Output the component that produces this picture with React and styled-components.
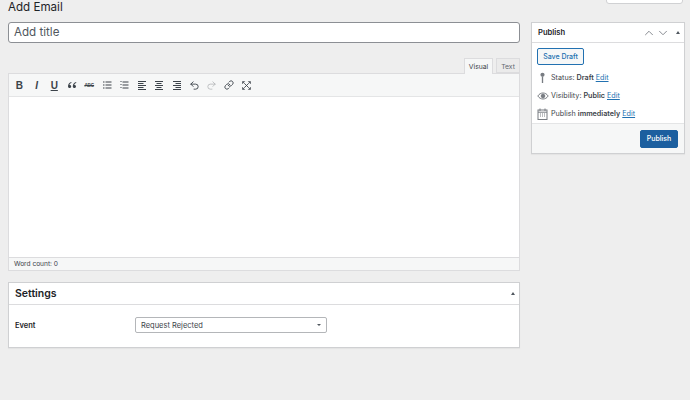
import React from 'react';
import styled, { createGlobalStyle } from 'styled-components';
import {
  Undo2, Redo2, Link, ChevronUp, ChevronDown,
} from 'lucide-react';

const GlobalStyle = createGlobalStyle`
  html, body {
    margin: 0;
    padding: 0;
    background: #eeeeee;
    font-family: Inter, "Liberation Sans", sans-serif;
    color: #1d2327;
    overflow: hidden;
  }
`;

const Page = styled.div`
  position: relative;
  width: 690px;
  height: 400px;
  display: flex;
  gap: 11px;
  padding: 0 5px 0 8px;
  box-sizing: border-box;
`;

const ScreenTab = styled.div`
  position: absolute;
  top: -1px;
  left: 606px;
  width: 77px;
  height: 5px;
  background: #fff;
  border: 1px solid #d0d1d3;
  border-radius: 0 0 3px 3px;
  box-sizing: border-box;
`;

const MainColumn = styled.div`
  width: 512px;
  display: flex;
  flex-direction: column;
`;

const SideColumn = styled.div`
  width: 154px;
  padding-top: 22px;
`;

const Heading = styled.h1`
  margin: 0;
  height: 22px;
  font-size: 11.6px;
  line-height: 14px;
  font-weight: 400;
  color: #1d2327;
`;

const TitleInput = styled.div`
  height: 21px;
  box-sizing: border-box;
  background: #fff;
  border: 1px solid #8c8f94;
  border-radius: 3px;
  padding: 0 5px;
  font-size: 11.6px;
  line-height: 19px;
  color: #50575e;
`;

const Tabs = styled.div`
  display: flex;
  justify-content: flex-end;
  gap: 3px;
  margin-top: 15px;
  height: 16px;
`;

const Tab = styled.div`
  width: ${(p) => (p.$active ? 29 : 24)}px;
  height: ${(p) => (p.$active ? 16 : 15)}px;
  box-sizing: border-box;
  text-align: center;
  font-size: 6.8px;
  line-height: 15px;
  color: ${(p) => (p.$active ? '#3c434a' : '#646970')};
  background: ${(p) => (p.$active ? '#f6f7f7' : '#ebebeb')};
  border: 1px solid #dcdcde;
  border-bottom: ${(p) => (p.$active ? 'none' : '1px solid #dcdcde')};
  z-index: 1;
`;

const Editor = styled.div`
  border: 1px solid #dcdcde;
  margin-top: -1px;
  display: flex;
  flex-direction: column;
`;

const Toolbar = styled.div`
  height: 23px;
  box-sizing: border-box;
  background: #f6f7f7;
  border-bottom: 1px solid #e4e5e6;
  display: flex;
  align-items: center;
  padding-left: 1.5px;
`;

const ToolButton = styled.span`
  width: 17.5px;
  height: 17px;
  display: flex;
  align-items: center;
  justify-content: center;
  color: ${(p) => (p.$off ? '#a7aaad' : '#3c434a')};
  font-family: "Liberation Sans", sans-serif;
  font-size: 10px;
  font-weight: 700;
  font-style: ${(p) => (p.$italic ? 'italic' : 'normal')};
  text-decoration: ${(p) => (p.$under ? 'underline' : 'none')};
`;

const TinyLabel = styled.span`
  font-size: 4.5px;
  text-decoration: line-through;
`;

const EditArea = styled.div`
  height: 160px;
  background: #fff;
`;

const StatusBar = styled.div`
  height: 13px;
  box-sizing: border-box;
  background: #f6f7f7;
  border-top: 1px solid #dcdcde;
  padding-left: 5px;
  font-size: 6.6px;
  line-height: 12px;
  color: #3c434a;
`;

const Box = styled.section`
  background: #fff;
  border: 1px solid #cfd0d2;
  box-shadow: 0 1px 1px rgba(0, 0, 0, 0.04);
  box-sizing: border-box;
`;

const SettingsBox = styled(Box)`
  margin-top: 11px;
  height: 66px;
`;

const BoxHeader = styled.div`
  height: ${(p) => p.$height}px;
  box-sizing: border-box;
  border-bottom: 1px solid #dcdcde;
  display: flex;
  align-items: center;
  justify-content: space-between;
  padding: 0 4px 0 ${(p) => p.$left}px;
`;

const SettingsTitle = styled.h2`
  margin: 0;
  font-size: 10.5px;
  font-weight: 600;
`;

const PublishTitle = styled.h2`
  margin: 0;
  font-size: 7.6px;
  font-weight: 600;
`;

const Caret = styled.span`
  width: 0;
  height: 0;
  border-left: 2.5px solid transparent;
  border-right: 2.5px solid transparent;
  border-bottom: 3px solid #50575e;
`;

const HeaderIcons = styled.div`
  display: flex;
  align-items: center;
  color: #787c82;

  ${Caret} {
    margin-left: 6px;
  }
`;

const FieldRow = styled.div`
  display: flex;
  align-items: center;
  padding: 12px 0 0 6px;
`;

const FieldLabel = styled.label`
  width: 120px;
  font-size: 7.5px;
  font-weight: 600;
`;

const Select = styled.div`
  width: 192px;
  height: 16px;
  box-sizing: border-box;
  background: #fff;
  border: 1px solid #b4b6b9;
  border-radius: 2px;
  display: flex;
  align-items: center;
  justify-content: space-between;
  padding: 0 5px;
  font-size: 7.5px;
  color: #3c434a;
`;

const SelectCaret = styled.span`
  width: 0;
  height: 0;
  border-left: 2px solid transparent;
  border-right: 2px solid transparent;
  border-top: 2.5px solid #50575e;
`;

const PublishBody = styled.div`
  padding: 5px 5px 0;
`;

const SaveDraft = styled.button`
  display: block;
  width: 47px;
  height: 17px;
  padding: 0;
  background: #f6f7f7;
  border: 1px solid #2271b1;
  border-radius: 2px;
  color: #2271b1;
  font-family: inherit;
  font-size: 7px;
  font-weight: 500;
  margin-bottom: 3px;
`;

const MetaRow = styled.div`
  height: 18.4px;
  display: flex;
  align-items: center;
  font-size: 7.2px;
  color: #3c434a;
  white-space: pre;
`;

const MetaIcon = styled.span`
  width: 14px;
  display: flex;
  align-items: center;
  color: #787c82;
`;

const Strong = styled.span`
  font-weight: 600;
`;

const EditLink = styled.a`
  color: #2271b1;
  text-decoration: underline;
  margin-left: 2px;
`;

const PublishFooter = styled.div`
  height: 30px;
  box-sizing: border-box;
  background: #f6f7f7;
  border-top: 1px solid #e4e5e6;
  display: flex;
  align-items: center;
  justify-content: flex-end;
  padding-right: 6px;
`;

const PublishButton = styled.button`
  width: 38px;
  height: 18px;
  padding: 0;
  background: #1c5f9f;
  border: 1px solid #1c5f9f;
  border-radius: 2px;
  color: #fff;
  font-family: inherit;
  font-size: 7px;
  font-weight: 500;
`;

const Icon = ({ children, size = 10, viewBox = '0 0 10 10' }) => (
  <svg width={size} height={size} viewBox={viewBox} fill="currentColor" stroke="none">
    {children}
  </svg>
);

const lines = (rows) => rows.map(([x, y, w]) => <rect key={`${x}-${y}`} x={x} y={y} width={w} height="1" />);

const QuoteIcon = () => (
  <Icon>
    <path d="M4.4 2C2.4 2.6 1 4 1 6.2 1 7.4 1.7 8 2.6 8c.9 0 1.6-.7 1.6-1.5S3.600 5 2.800 5c-.2 0-.3 0-.4.1.2-.9 1-1.700 2-2.100zM9.200 2C7.200 2.600 5.800 4 5.800 6.200c0 1.200.7 1.800 1.600 1.800.9 0 1.600-.7 1.600-1.500S8.400 5 7.600 5c-.2 0-.3 0-.4.1.2-.9 1-1.700 2-2.100z" />
  </Icon>
);

const BulletIcon = () => (
  <Icon>{lines([[1, 1.5, 1.500], [3.500, 1.500, 6], [1, 4.500, 1.500], [3.500, 4.500, 6], [1, 7.500, 1.500], [3.500, 7.500, 6]])}</Icon>
);

const NumberIcon = () => (
  <Icon>{lines([[1.500, 1, 1], [3.500, 1.500, 6], [1.500, 4, 1], [3.500, 4.500, 6], [1.500, 7, 1], [3.500, 7.500, 6]])}</Icon>
);

const AlignLeftIcon = () => (
  <Icon>{lines([[1, 1, 8], [1, 3, 5.500], [1, 5, 8], [1, 7, 5.500], [1, 9, 8]])}</Icon>
);

const AlignCenterIcon = () => (
  <Icon>{lines([[1, 1, 8], [2.500, 3, 5], [1, 5, 8], [2.500, 7, 5], [1, 9, 8]])}</Icon>
);

const AlignRightIcon = () => (
  <Icon>{lines([[1, 1, 8], [3.500, 3, 5.500], [1, 5, 8], [3.500, 7, 5.500], [1, 9, 8]])}</Icon>
);

const FullscreenIcon = () => (
  <svg width="9" height="9" viewBox="0 0 10 10" fill="currentColor" stroke="currentColor" strokeWidth="1">
    <path d="M2.500 2.500L7.500 7.500M7.500 2.500L2.500 7.500" />
    <path d="M0.500 0.500H3L0.500 3zM9.500 0.500H7L9.500 3zM0.500 9.500H3L0.500 7zM9.500 9.500H7L9.500 7z" strokeWidth="0.5" />
  </svg>
);

const PinIcon = () => (
  <Icon size={11}>
    <circle cx="5" cy="2.500" r="1.900" />
    <rect x="4.400" y="4" width="1.200" height="6" />
  </Icon>
);

const EyeIcon = () => (
  <svg width="12" height="10" viewBox="0 0 12 10" fill="none" stroke="currentColor" strokeWidth="1">
    <path d="M0.800 5C2.200 2.900 4 2 6 2s3.800.9 5.200 3C9.800 7.100 8 8 6 8S2.200 7.100.800 5z" />
    <circle cx="6" cy="5" r="1.800" fill="currentColor" />
  </svg>
);

const CalendarIcon = () => (
  <svg width="11" height="12" viewBox="0 0 11 12" fill="none" stroke="currentColor" strokeWidth="1">
    <rect x="1" y="2" width="9" height="9.500" />
    <path d="M3 0.500V3M8 0.500V3M1 4.200H10" />
    <path d="M3 6H4M5 6H6M7 6H8M3 8H4M5 8H6M7 8H8" />
  </svg>
);

const tools = [
  <ToolButton key="b">B</ToolButton>,
  <ToolButton key="i" $italic>I</ToolButton>,
  <ToolButton key="u" $under>U</ToolButton>,
  <ToolButton key="q"><QuoteIcon /></ToolButton>,
  <ToolButton key="s"><TinyLabel>ABC</TinyLabel></ToolButton>,
  <ToolButton key="ul"><BulletIcon /></ToolButton>,
  <ToolButton key="ol"><NumberIcon /></ToolButton>,
  <ToolButton key="al"><AlignLeftIcon /></ToolButton>,
  <ToolButton key="ac"><AlignCenterIcon /></ToolButton>,
  <ToolButton key="ar"><AlignRightIcon /></ToolButton>,
  <ToolButton key="un"><Undo2 size={11} strokeWidth={2} /></ToolButton>,
  <ToolButton key="re" $off><Redo2 size={11} strokeWidth={1.500} /></ToolButton>,
  <ToolButton key="ln"><Link size={10} strokeWidth={2.200} /></ToolButton>,
  <ToolButton key="fs"><FullscreenIcon /></ToolButton>,
];

const App = () => (
  <Page>
    <GlobalStyle />
    <ScreenTab />
    <MainColumn>
      <Heading>Add Email</Heading>
      <TitleInput>Add title</TitleInput>
      <Tabs>
        <Tab $active>Visual</Tab>
        <Tab>Text</Tab>
      </Tabs>
      <Editor>
        <Toolbar>{tools}</Toolbar>
        <EditArea />
        <StatusBar>Word count: 0</StatusBar>
      </Editor>
      <SettingsBox>
        <BoxHeader $height={22} $left={6}>
          <SettingsTitle>Settings</SettingsTitle>
          <Caret />
        </BoxHeader>
        <FieldRow>
          <FieldLabel>Event</FieldLabel>
          <Select>
            Request Rejected
            <SelectCaret />
          </Select>
        </FieldRow>
      </SettingsBox>
    </MainColumn>
    <SideColumn>
      <Box>
        <BoxHeader $height={20} $left={6}>
          <PublishTitle>Publish</PublishTitle>
          <HeaderIcons>
            <ChevronUp size={14} strokeWidth={1.500} />
            <ChevronDown size={14} strokeWidth={1.500} />
            <Caret />
          </HeaderIcons>
        </BoxHeader>
        <PublishBody>
          <SaveDraft>Save Draft</SaveDraft>
          <MetaRow>
            <MetaIcon><PinIcon /></MetaIcon>
            Status: <Strong>Draft</Strong><EditLink>Edit</EditLink>
          </MetaRow>
          <MetaRow>
            <MetaIcon><EyeIcon /></MetaIcon>
            Visibility: <Strong>Public</Strong><EditLink>Edit</EditLink>
          </MetaRow>
          <MetaRow>
            <MetaIcon><CalendarIcon /></MetaIcon>
            Publish <Strong>immediately</Strong><EditLink>Edit</EditLink>
          </MetaRow>
        </PublishBody>
        <PublishFooter>
          <PublishButton>Publish</PublishButton>
        </PublishFooter>
      </Box>
    </SideColumn>
  </Page>
);

export default App;
